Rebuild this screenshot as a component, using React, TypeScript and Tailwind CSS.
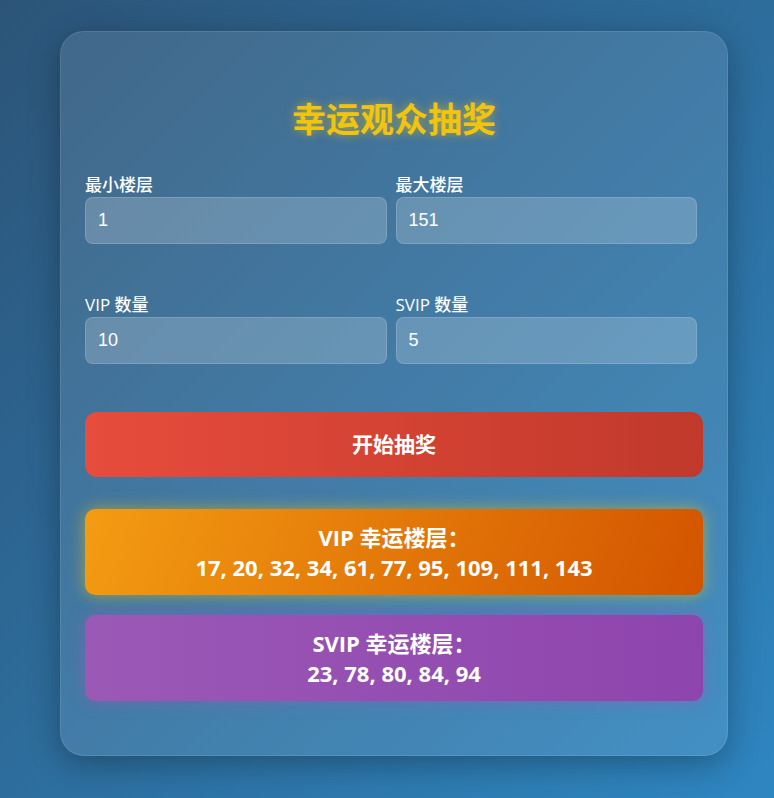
export default function App() {
  const font = { fontFamily: '"Open Sans", "Noto Sans CJK SC", sans-serif' };
  return (
    <div
      className="w-[774px] h-[798px] overflow-hidden bg-[linear-gradient(135deg,#2c5478_0%,#2e86c1_100%)] pt-[31px]"
      style={font}
    >
      <div className="ml-[60px] w-[668px] rounded-[24px] bg-white/10 border border-white/10 shadow-[0_8px_32px_rgba(0,0,0,0.3)] px-[24px] pt-[63px] pb-[54px] text-white">
        <div className="h-[48px] leading-[48px] text-center text-[34px] font-bold text-[#f1c40f] [text-shadow:0_0_10px_rgba(241,196,15,0.6)]">
          幸运观众抽奖
        </div>

        <div className="mt-[32px] w-[612px] grid grid-cols-2 gap-x-[9px]">
          <Field label="最小楼层" value="1" />
          <Field label="最大楼层" value="151" />
        </div>
        <div className="mt-[51px] w-[612px] grid grid-cols-2 gap-x-[9px]">
          <Field label="VIP 数量" value="10" />
          <Field label="SVIP 数量" value="5" />
        </div>

        <button className="mt-[48px] w-full h-[65px] rounded-[12px] bg-[linear-gradient(90deg,#e74c3c,#c0392b)] text-white text-[21px] font-bold flex items-center justify-center">
          开始抽奖
        </button>

        <div className="mt-[32px] w-full rounded-[10px] bg-[linear-gradient(110deg,#f39c12,#d35400)] shadow-[0_0_16px_rgba(241,196,15,0.55)] py-[13px] text-center text-[22px] leading-[30px] font-bold">
          <div>VIP 幸运楼层：</div>
          <div>17, 20, 32, 34, 61, 77, 95, 109, 111, 143</div>
        </div>

        <div className="mt-[20px] w-full rounded-[10px] bg-[linear-gradient(90deg,#9b59b6,#8e44ad)] shadow-[0_0_16px_rgba(155,89,182,0.55)] py-[13px] text-center text-[22px] leading-[30px] font-bold">
          <div>SVIP 幸运楼层：</div>
          <div>23, 78, 80, 84, 94</div>
        </div>
      </div>
    </div>
  );
}

function Field({ label, value }: { label: string; value: string }) {
  return (
    <div className="flex flex-col">
      <label className="text-[17px] leading-[20px] font-medium">{label}</label>
      <div
        className="mt-[2px] h-[47px] rounded-[8px] bg-white/20 border border-white/15 flex items-center pl-[12px] text-[18px] text-white"
        style={{ fontFamily: '"Liberation Sans", "Noto Sans CJK SC", sans-serif' }}
      >
        {value}
      </div>
    </div>
  );
}
